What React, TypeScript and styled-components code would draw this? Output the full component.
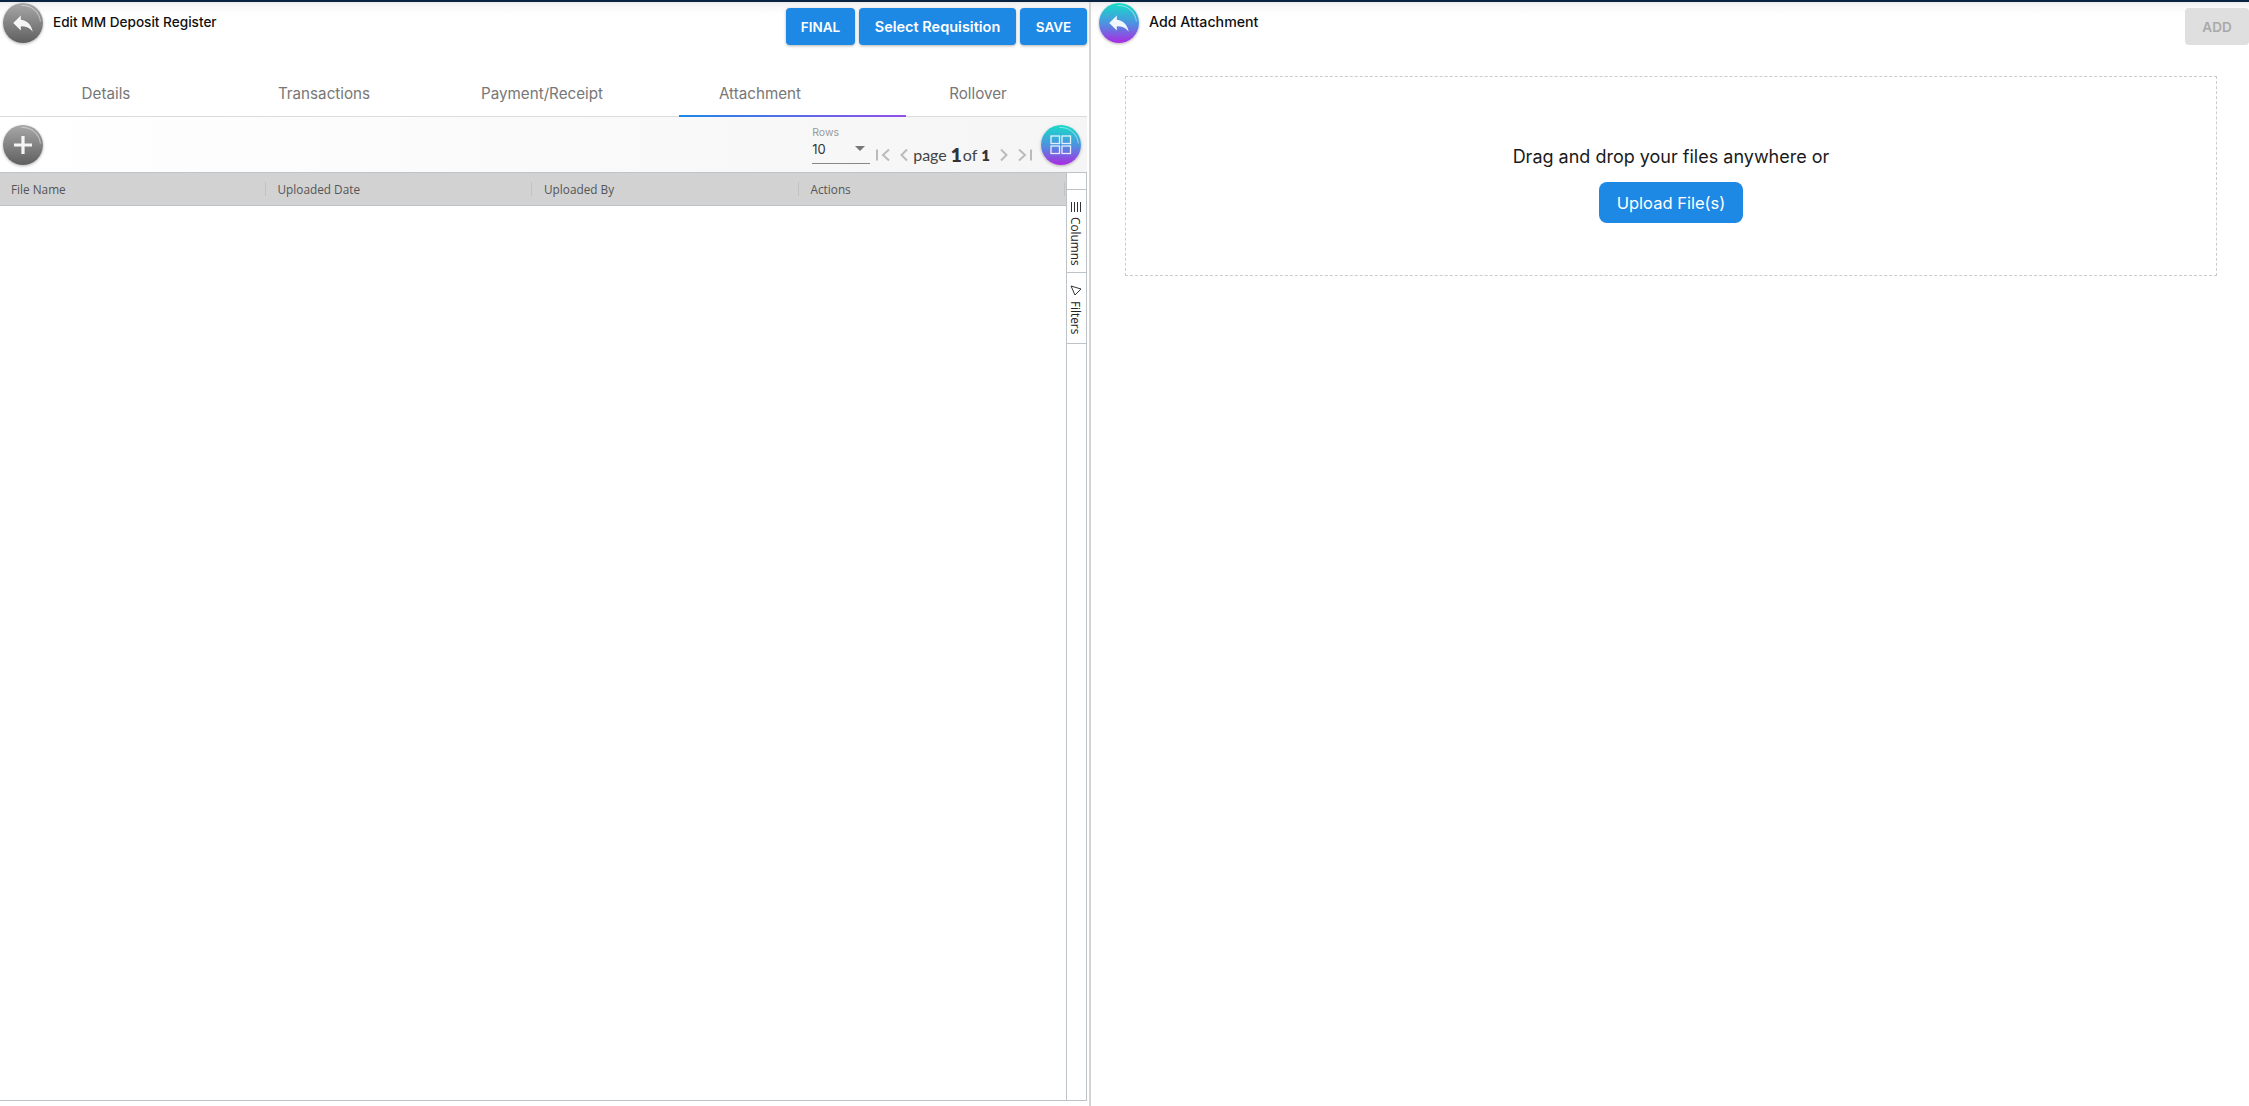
import React from 'react';
import styled, { createGlobalStyle } from 'styled-components';

const tabs = ['Details', 'Transactions', 'Payment/Receipt', 'Attachment', 'Rollover'];
const columns = ['File Name', 'Uploaded Date', 'Uploaded By', 'Actions'];

const ReplyIcon = () => (
  <svg width="26" height="26" viewBox="0 0 24 24" fill="rgba(255,255,255,0.92)">
    <path d="M10 9V5l-7 7 7 7v-4.1c5 0 8.5 1.6 11 5.1-1-5-4-10-11-11z" />
  </svg>
);

const PlusIcon = () => (
  <svg width="24" height="24" viewBox="0 0 24 24" fill="rgba(255,255,255,0.92)">
    <path d="M10.4 3h3.2v7.4H21v3.2h-7.4V21h-3.2v-7.4H3v-3.2h7.4z" />
  </svg>
);

const GridIcon = () => (
  <svg width="22" height="20" viewBox="0 0 22 20" fill="none" stroke="rgba(255,255,255,0.85)" strokeWidth="1.3">
    <rect x="1" y="1" width="8.5" height="7.5" />
    <rect x="12" y="1" width="8.5" height="7.5" />
    <rect x="1" y="11" width="8.5" height="7.5" />
    <rect x="12" y="11" width="8.5" height="7.5" />
  </svg>
);

const ColumnsIcon = () => (
  <svg width="12" height="10" viewBox="0 0 12 10" stroke="#333" strokeWidth="1">
    <path d="M1.5 0v10M4.5 0v10M7.5 0v10M10.5 0v10" />
  </svg>
);

const FilterIcon = () => (
  <svg width="12" height="11" viewBox="0 0 12 11" fill="none" stroke="#333" strokeWidth="1">
    <path d="M1 1 11 4 5 10z" />
  </svg>
);

const PagerIcon = ({ width, d }: { width: number; d: string }) => (
  <svg width={width} height="14" viewBox={`0 0 ${width} 14`} fill="none" stroke="#bbb" strokeWidth="2">
    <path d={d} />
  </svg>
);

export default function App() {
  return (
    <>
      <GlobalStyle />
      <Shell>
        <LeftPanel>
          <Header>
            <HeaderLeft>
              <RoundButton $tone="gray"><ReplyIcon /></RoundButton>
              <Title $size={13.6}>Edit MM Deposit Register</Title>
            </HeaderLeft>
            <Actions>
              <PrimaryButton $width={69}>FINAL</PrimaryButton>
              <PrimaryButton $width={157} $size={14.5}>Select Requisition</PrimaryButton>
              <PrimaryButton $width={67}>SAVE</PrimaryButton>
            </Actions>
          </Header>

          <TabBar>
            {tabs.map(t => <Tab key={t}>{t}</Tab>)}
            <TabIndicator />
          </TabBar>

          <Toolbar>
            <RoundButton $tone="gray"><PlusIcon /></RoundButton>
            <ToolbarRight>
              <RowsField>
                <RowsLabel>Rows</RowsLabel>
                <RowsSelect>
                  <span>10</span>
                  <SelectArrow />
                </RowsSelect>
              </RowsField>
              <Pager>
                <PagerIcon width={14} d="M1 1.5v11M13 1.5 7 7l6 5.5" />
                <PagerIcon width={8} d="M7 1.5 1.5 7 7 12.5" />
                <PageText>
                  <span>page</span>
                  <PageNum $size={19}>1</PageNum>
                  <OfWord>of</OfWord>
                  <PageNum $size={15}>1</PageNum>
                </PageText>
                <PagerIcon width={8} d="M1 1.5 6.5 7 1 12.5" />
                <PagerIcon width={14} d="M13 1.5v11M1 1.5 7 7l-6 5.5" />
              </Pager>
              <RoundButton $tone="color"><GridIcon /></RoundButton>
            </ToolbarRight>
          </Toolbar>

          <GridWrap>
            <Table>
              <HeaderRow>
                {columns.map(c => <HeaderCell key={c}>{c}</HeaderCell>)}
              </HeaderRow>
            </Table>
            <SideBar>
              <SideBlank />
              <SideTab $height={83}><ColumnsIcon /><SideLabel>Columns</SideLabel></SideTab>
              <SideTab $height={71}><FilterIcon /><SideLabel>Filters</SideLabel></SideTab>
            </SideBar>
          </GridWrap>
        </LeftPanel>

        <Divider />

        <RightPanel>
          <RightHeader>
            <HeaderLeft>
              <RoundButton $tone="color"><ReplyIcon /></RoundButton>
              <Title $size={14.2}>Add Attachment</Title>
            </HeaderLeft>
            <DisabledButton>ADD</DisabledButton>
          </RightHeader>
          <DropZone>
            <DropText>Drag and drop your files anywhere or</DropText>
            <UploadButton>Upload File(s)</UploadButton>
          </DropZone>
        </RightPanel>
      </Shell>
    </>
  );
}

const GlobalStyle = createGlobalStyle`
  html, body {
    margin: 0;
    padding: 0;
    background: #fff;
    overflow: hidden;
  }

  * {
    box-sizing: border-box;
  }
`;

const Shell = styled.div`
  position: relative;
  display: flex;
  width: 2249px;
  height: 1106px;
  overflow: hidden;
  font-family: Inter, 'Noto Sans', sans-serif;
  background: linear-gradient(#e6e8ea 2px, #f4f4f4 4px, #fff 14px);

  &::before {
    content: '';
    position: absolute;
    top: 0;
    left: 0;
    right: 0;
    height: 2px;
    background: #0b2342;
  }
`;

const LeftPanel = styled.div`
  display: flex;
  flex-direction: column;
  width: 1087px;
  flex: none;
`;

const Divider = styled.div`
  width: 2px;
  margin-left: 2px;
  flex: none;
  background: #d4d4d4;
`;

const RightPanel = styled.div`
  flex: 1;
  display: flex;
  flex-direction: column;
`;

const Header = styled.div`
  display: flex;
  justify-content: space-between;
  height: 44px;
  padding-top: 3px;
`;

const RightHeader = styled(Header)`
  padding-left: 5px;
`;

const HeaderLeft = styled.div`
  display: flex;
  align-items: flex-start;
  gap: 10px;
  padding-left: 3px;
`;

const RoundButton = styled.div<{ $tone: 'gray' | 'color' }>`
  position: relative;
  display: flex;
  align-items: center;
  justify-content: center;
  width: 40px;
  height: 40px;
  flex: none;
  border-radius: 50%;
  background: ${p =>
    p.$tone === 'gray'
      ? 'linear-gradient(#a8a8a8, #5f5f5f)'
      : 'linear-gradient(#17dcc8, #4b94e0 50%, #ab2be2)'};
  box-shadow: 0 1px 3px rgba(0, 0, 0, 0.3);

  &::after {
    content: '';
    position: absolute;
    inset: 2px;
    border-radius: 50%;
    border: 1px solid transparent;
    border-top-color: rgba(255, 255, 255, 0.45);
    transform: rotate(40deg);
  }
`;

const Title = styled.div<{ $size: number }>`
  margin-top: 11px;
  font-size: ${p => p.$size}px;
  line-height: 16px;
  font-weight: 500;
  color: #111;
`;

const Actions = styled.div`
  display: flex;
  gap: 4px;
  padding-top: 5px;
`;

const PrimaryButton = styled.div<{ $width: number; $size?: number }>`
  display: flex;
  align-items: center;
  justify-content: center;
  width: ${p => p.$width}px;
  height: 37px;
  border-radius: 4px;
  background: #1e88e5;
  color: #fff;
  font-size: ${p => p.$size ?? 13.5}px;
  font-weight: 600;
  box-shadow: 0 1px 3px rgba(0, 0, 0, 0.3);
`;

const DisabledButton = styled(PrimaryButton).attrs({ $width: 64 })`
  margin-top: 5px;
  background: #dfdfdf;
  color: #a9a9a9;
  box-shadow: none;
`;

const TabBar = styled.div`
  position: relative;
  display: grid;
  grid-template-columns: repeat(5, 218px);
  height: 73px;
  margin-left: -3px;
  border-bottom: 1px solid #dcdcdc;
`;

const Tab = styled.div`
  display: flex;
  align-items: center;
  justify-content: center;
  padding-top: 26px;
  font-size: 15.2px;
  color: #777;
`;

const TabIndicator = styled.div`
  position: absolute;
  left: 682px;
  bottom: -1px;
  width: 227px;
  height: 2px;
  background: linear-gradient(to right, #1e88e5, #9350e8);
`;

const Toolbar = styled.div`
  display: flex;
  align-items: center;
  justify-content: space-between;
  height: 56px;
  padding: 0 6px 0 3px;
  background: linear-gradient(to right, #fff, #f5f5f5);
  border-bottom: 1px solid #bdc3c7;
`;

const ToolbarRight = styled.div`
  display: flex;
  align-items: center;
`;

const RowsField = styled.div`
  display: flex;
  flex-direction: column;
  width: 58px;
  margin-top: 1px;
`;

const RowsLabel = styled.div`
  font-size: 10.5px;
  line-height: 13px;
  color: #999;
`;

const RowsSelect = styled.div`
  display: flex;
  align-items: center;
  justify-content: space-between;
  height: 25px;
  padding: 0 5px 4px 0;
  border-bottom: 1px solid #888;
  font-size: 13px;
  color: #333;
`;

const SelectArrow = styled.div`
  width: 0;
  height: 0;
  margin-bottom: 2px;
  border-left: 5px solid transparent;
  border-right: 5px solid transparent;
  border-top: 5px solid #777;
`;

const Pager = styled.div`
  display: flex;
  align-items: center;
  align-self: flex-end;
  height: 20px;
  gap: 10px;
  margin: 0 9px 0 6px;
`;

const PageText = styled.div`
  display: flex;
  align-items: center;
  margin-left: -5px;
  font-family: Lato, sans-serif;
  font-size: 16px;
  color: #444;
`;

const PageNum = styled.span<{ $size: number }>`
  margin-left: 4px;
  font-size: ${p => p.$size}px;
  font-weight: 800;
  color: #333;
`;

const OfWord = styled.span`
  margin-left: 1px;
`;

const GridWrap = styled.div`
  flex: 1;
  display: flex;
  margin-bottom: 5px;
  border-bottom: 1px solid #bdc3c7;
`;

const Table = styled.div`
  flex: 1;
`;

const HeaderRow = styled.div`
  display: grid;
  grid-template-columns: repeat(4, 1fr);
  height: 33px;
  background: #d2d2d2;
  border-bottom: 1px solid #bdc3c7;
`;

const HeaderCell = styled.div`
  position: relative;
  display: flex;
  align-items: center;
  padding-left: 11px;
  font-family: 'Open Sans', sans-serif;
  font-size: 11.8px;
  color: #555;

  &::after {
    content: '';
    position: absolute;
    right: 1px;
    top: 9px;
    bottom: 9px;
    width: 1px;
    background: #c2c2c2;
  }
`;

const SideBar = styled.div`
  width: 21px;
  flex: none;
  border-left: 1px solid #bdc3c7;
  border-right: 1px solid #bdc3c7;
`;

const SideBlank = styled.div`
  height: 17px;
  border-bottom: 1px solid #bdc3c7;
`;

const SideTab = styled.div<{ $height: number }>`
  display: flex;
  flex-direction: column;
  align-items: center;
  gap: 5px;
  height: ${p => p.$height}px;
  padding: 12px 2px 0 0;
  border-bottom: 1px solid #bdc3c7;
`;

const SideLabel = styled.div`
  writing-mode: vertical-rl;
  font-family: 'Open Sans', sans-serif;
  font-size: 11.8px;
  line-height: 14px;
  color: #222;
`;

const DropZone = styled.div`
  display: flex;
  flex-direction: column;
  align-items: center;
  height: 200px;
  margin: 32px 32px 0 34px;
  padding-top: 68px;
  border: 1px dashed #ccc;
`;

const DropText = styled.div`
  font-size: 18px;
  line-height: 24px;
  color: #1a1a1a;
`;

const UploadButton = styled.div`
  display: flex;
  align-items: center;
  justify-content: center;
  width: 144px;
  height: 41px;
  margin-top: 13px;
  border-radius: 8px;
  background: #1e88e5;
  color: #fff;
  font-size: 16.5px;
  font-weight: 400;
`;
